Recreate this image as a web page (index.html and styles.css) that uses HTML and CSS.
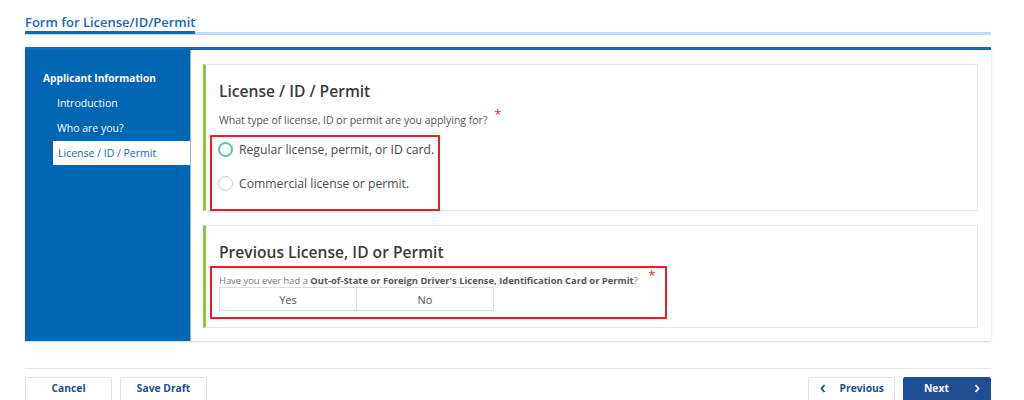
FILE: index.html
```html
<!DOCTYPE html>
<html lang="en">
<head>
    <meta charset="UTF-8">
    <meta name="viewport" content="width=device-width, initial-scale=1.0">
    <title>Form for License/ID/Permit</title>
    <link rel="stylesheet" href="styles.css">
</head>
<body>
    <div class="page">
        <div class="page-title">
            <h1>Form for License/ID/Permit</h1>
        </div>

        <div class="form-box">
            <nav class="sidebar">
                <div class="nav-group">Applicant Information</div>
                <a class="nav-item" href="#">Introduction</a>
                <a class="nav-item" href="#">Who are you?</a>
                <a class="nav-item active" href="#">License / ID / Permit</a>
            </nav>

            <div class="content">
                <section class="card card-type">
                    <h2>License / ID / Permit</h2>
                    <p class="question">What type of license, ID or permit are you applying for? <span class="req">*</span></p>
                    <div class="highlight radio-box">
                        <label class="radio checked"><span class="dot"></span>Regular license, permit, or ID card.</label>
                        <label class="radio"><span class="dot"></span>Commercial license or permit.</label>
                    </div>
                </section>

                <section class="card card-prev">
                    <h2>Previous License, ID or Permit</h2>
                    <div class="highlight yesno-box">
                        <p class="question small">Have you ever had a <b>Out-of-State or Foreign Driver's License, Identification Card or Permit</b>? <span class="req">*</span></p>
                        <div class="toggle">
                            <button type="button">Yes</button>
                            <button type="button">No</button>
                        </div>
                    </div>
                </section>
            </div>
        </div>

        <div class="footer">
            <div class="footer-left">
                <button type="button" class="btn">Cancel</button>
                <button type="button" class="btn">Save Draft</button>
            </div>
            <div class="footer-right">
                <button type="button" class="btn btn-prev">
                    <svg class="chev" width="6" height="9" viewBox="0 0 6 9"><polyline points="4.5,1 1.5,4.5 4.5,8" fill="none" stroke="currentColor" stroke-width="1.8"/></svg>
                    <span>Previous</span>
                </button>
                <button type="button" class="btn btn-next">
                    <span>Next</span>
                    <svg class="chev" width="6" height="9" viewBox="0 0 6 9"><polyline points="1.5,1 4.5,4.5 1.5,8" fill="none" stroke="currentColor" stroke-width="1.8"/></svg>
                </button>
            </div>
        </div>
    </div>
</body>
</html>
```

FILE: styles.css
```css
body {
    margin: 0;
    font-family: "Open Sans", Arial, sans-serif;
    background-color: #ffffff;
    color: #444;
}
.page {
    width: 966px;
    margin-left: 25px;
}
.page-title {
    padding-top: 10px;
    border-bottom: 3px solid #bcdcfb;
}
.page-title h1 {
    display: inline-block;
    margin: 0 0 -3px 0;
    padding-bottom: 0;
    font-size: 13px;
    line-height: 18px;
    font-weight: 600;
    color: #1768b8;
    border-bottom: 3px solid #0d68b5;
    width: 170px;
    white-space: nowrap;
}
.form-box {
    margin-top: 12px;
    display: flex;
    border-top: 3px solid #0f6cbd;
    box-shadow: 0 1px 2px rgba(0,0,0,0.18);
    height: 291px;
}
.sidebar {
    width: 165px;
    background-color: #0066b2;
    padding-top: 19px;
    display: flex;
    flex-direction: column;
    border-right: 1px solid #8cb9e4;
}
.nav-group {
    color: #fff;
    font-size: 10.2px;
    font-weight: 700;
    padding-left: 18px;
    height: 18px;
    line-height: 18px;
    margin-bottom: 4px;
}
.nav-item {
    color: #fff;
    font-size: 10.5px;
    text-decoration: none;
    padding-left: 32px;
    height: 25px;
    line-height: 25px;
}
.nav-item.active {
    background-color: #fff;
    color: #1b65b0;
    margin-left: 28px;
    padding-left: 5px;
    height: 24px;
    line-height: 24px;
}
.content {
    flex: 1;
    background-color: #fff;
    padding: 14px 13px 13px 12px;
    display: flex;
    flex-direction: column;
    gap: 14px;
}
.card {
    border: 1px solid #e6e6e6;
    border-left: 3px solid #8dc63f;
    padding: 0 13px;
    box-sizing: border-box;
}
.card-type {
    height: 147px;
}
.card-prev {
    height: 103px;
}
.card h2 {
    margin: 15px 0 0 0;
    font-size: 15.6px;
    font-weight: 600;
    color: #3b3b3b;
    line-height: 22px;
}
.question {
    margin: 4px 0 0 0;
    font-size: 10.5px;
    color: #555;
    line-height: 16px;
}
.req {
    color: #e0312f;
    font-size: 13px;
    vertical-align: 5px;
    margin-left: 4px;
}
.highlight {
    border: 2px solid #ee1c24;
    margin-left: -9px;
    box-sizing: border-box;
}
.radio-box {
    width: 230px;
    height: 76px;
    margin-top: 7px;
    padding: 4px 0 0 6px;
}
.radio {
    display: flex;
    align-items: center;
    gap: 6px;
    height: 17px;
    font-size: 12.2px;
    color: #4a4a4a;
    margin-bottom: 17px;
}
.radio .dot {
    width: 13px;
    height: 13px;
    border: 1.5px solid #c8c8c8;
    border-radius: 50%;
}
.radio.checked .dot {
    width: 11px;
    height: 11px;
    border: 2.5px solid #5cc6a4;
}
.yesno-box {
    width: 457px;
    height: 53px;
    margin-top: 3px;
    padding: 0 0 0 7px;
}
.question.small {
    margin-top: 0;
    font-size: 9.4px;
    color: #777;
    line-height: 14px;
}
.question.small b {
    color: #555;
}
.question.small .req {
    vertical-align: 4px;
    margin-left: 8px;
}
.toggle {
    display: flex;
    width: 275px;
    margin-top: -1px;
}
.toggle button {
    flex: 1;
    height: 24px;
    background-color: #fff;
    border: 1px solid #dcdcdc;
    font-family: "Open Sans", Arial, sans-serif;
    font-size: 11px;
    color: #555;
}
.toggle button + button {
    border-left: none;
}
.footer {
    margin-top: 27px;
    border-top: 1px solid #e6e6e6;
    padding-top: 8px;
    display: flex;
    justify-content: space-between;
}
.footer-left,
.footer-right {
    display: flex;
    gap: 8px;
}
.btn {
    width: 87px;
    height: 30px;
    background-color: #fff;
    border: 1px solid #e2e2e2;
    border-radius: 2px;
    font-family: "Open Sans", Arial, sans-serif;
    font-size: 10.3px;
    font-weight: 700;
    line-height: 14px;
    color: #254f8c;
    display: flex;
    align-items: flex-start;
    justify-content: center;
    padding: 3px 0 0 0;
}
.btn-prev {
    justify-content: space-between;
    padding: 3px 10px 0 11px;
}
.btn-next {
    width: 88px;
    background-color: #1f4e93;
    border-color: #1f4e93;
    color: #fff;
    justify-content: space-between;
    padding: 3px 10px 0 20px;
}
.chev {
    margin-top: 3px;
}
```
